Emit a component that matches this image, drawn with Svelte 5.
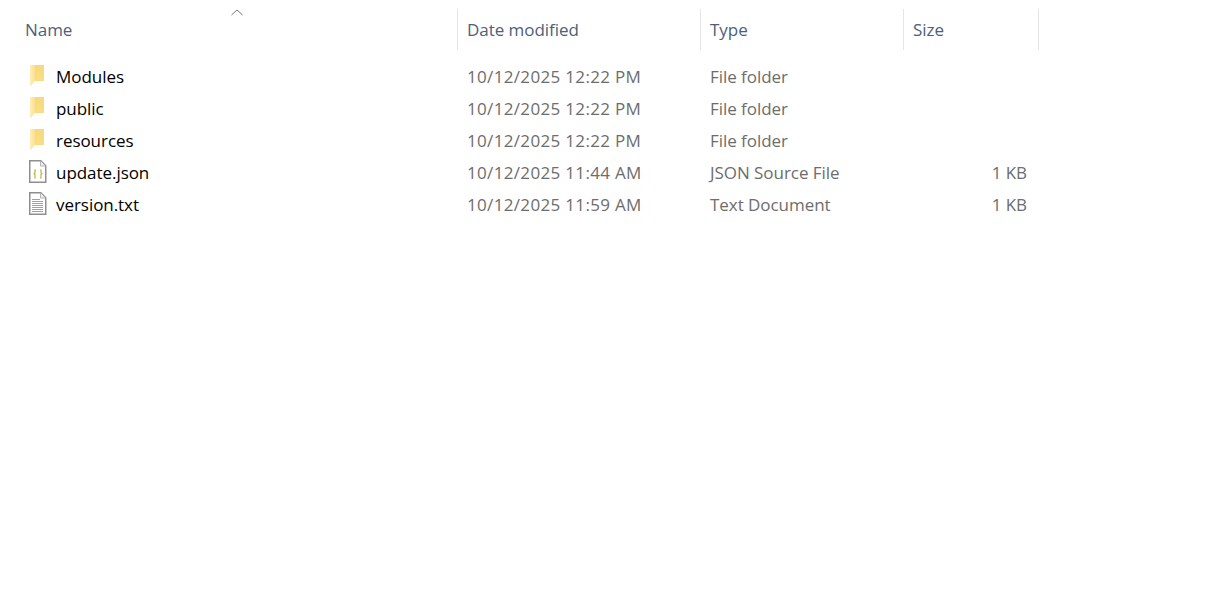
<script lang="ts">
  type Row = { name: string; date: string; type: string; size: string; icon: "folder" | "json" | "text" };

  const columns = [
    { label: "Name", cls: "name" },
    { label: "Date modified", cls: "date" },
    { label: "Type", cls: "type" },
    { label: "Size", cls: "size" },
  ];

  const rows: Row[] = [
    { name: "Modules", date: "10/12/2025 12:22 PM", type: "File folder", size: "", icon: "folder" },
    { name: "public", date: "10/12/2025 12:22 PM", type: "File folder", size: "", icon: "folder" },
    { name: "resources", date: "10/12/2025 12:22 PM", type: "File folder", size: "", icon: "folder" },
    { name: "update.json", date: "10/12/2025 11:44 AM", type: "JSON Source File", size: "1 KB", icon: "json" },
    { name: "version.txt", date: "10/12/2025 11:59 AM", type: "Text Document", size: "1 KB", icon: "text" },
  ];
</script>

<main class="explorer">
  <svg class="defs" width="0" height="0" aria-hidden="true">
    <defs>
      <linearGradient id="flap" x1="0" y1="0" x2="1" y2="0">
        <stop offset="0" stop-color="#fff0b5" />
        <stop offset="1" stop-color="#fbdf8c" />
      </linearGradient>
      <linearGradient id="back" x1="0" y1="0" x2="0" y2="1">
        <stop offset="0" stop-color="#f7d97e" />
        <stop offset="1" stop-color="#f9dc85" />
      </linearGradient>
    </defs>
  </svg>

  <header class="head">
    {#each columns as col}
      <div class="head-cell {col.cls}">
        {col.label}
        {#if col.cls === "name"}
          <svg class="sort" width="14" height="7" viewBox="0 0 14 7" aria-hidden="true">
            <path d="M1.5 6 7 1l5.5 5" fill="none" stroke="#7a7a7a" stroke-width="1" />
          </svg>
        {/if}
      </div>
    {/each}
  </header>

  <div class="list">
    {#each rows as row}
      <div class="row">
        <div class="cell file">
          <span class="icon">
            {#if row.icon === "folder"}
              <svg width="22" height="24" viewBox="0 0 22 24" aria-hidden="true">
                <path d="M2 1h14v16H2z" fill="url(#back)" />
                <path d="M2 1h5v15.5L3 22l-1-1z" fill="url(#flap)" />
              </svg>
            {:else}
              <svg width="22" height="24" viewBox="0 0 22 24" aria-hidden="true">
                <path d="M1.75.75h11l5 5v16.5h-16z" fill="#fff" stroke="#8f8f8f" stroke-width="1.5" />
                <path d="M12.5 1v5h5" fill="#efefef" stroke="#b5b5b5" />
                {#if row.icon === "json"}
                  <path d="M8 10H7v3l-1 .8 1 .8V18h1M12 10h1v3l1 .8-1 .8V18h-1" fill="none" stroke="#b6bb3a" stroke-width="1.2" />
                {:else}
                  <path d="M4 7.5h8M4 9.5h11M4 11.5h11M4 13.5h11M4 15.5h11M4 17.5h11M4 19.5h11" stroke="#a0a0a0" stroke-width="1" />
                {/if}
              </svg>
            {/if}
          </span>
          {row.name}
        </div>
        <div class="cell date">{row.date}</div>
        <div class="cell type">{row.type}</div>
        <div class="cell size">{row.size}</div>
      </div>
    {/each}
  </div>
</main>

<style>
  :global(body) {
    margin: 0;
    background: #fff;
  }

  .explorer {
    height: 596px;
    padding-top: 9px;
    box-sizing: border-box;
    overflow: hidden;
    font-family: "Open Sans", "Noto Sans", sans-serif;
    font-size: 17px;
    letter-spacing: -0.05px;
  }

  .defs {
    position: absolute;
  }

  .head,
  .row {
    display: grid;
    grid-template-columns: 458px 243px 203px 135px;
  }

  .head {
    height: 41px;
  }

  .head-cell {
    position: relative;
    display: flex;
    align-items: center;
    border-right: 1px solid #e5e5e5;
    padding-left: 9px;
    color: #4c607a;
  }

  .head-cell.name {
    padding-left: 25px;
  }

  .sort {
    position: absolute;
    top: 0;
    left: 230px;
  }

  .list {
    padding-top: 10px;
  }

  .row {
    height: 32px;
    align-items: center;
  }

  .cell {
    padding-left: 9px;
    color: #6d6d6d;
    white-space: nowrap;
  }

  .cell.date {
    letter-spacing: 0.33px;
  }

  .file {
    display: flex;
    align-items: center;
    gap: 6px;
    padding-left: 28px;
    color: #000;
  }

  .icon {
    display: flex;
    width: 22px;
    height: 24px;
  }

  .size {
    padding-right: 12px;
    text-align: right;
  }
</style>
